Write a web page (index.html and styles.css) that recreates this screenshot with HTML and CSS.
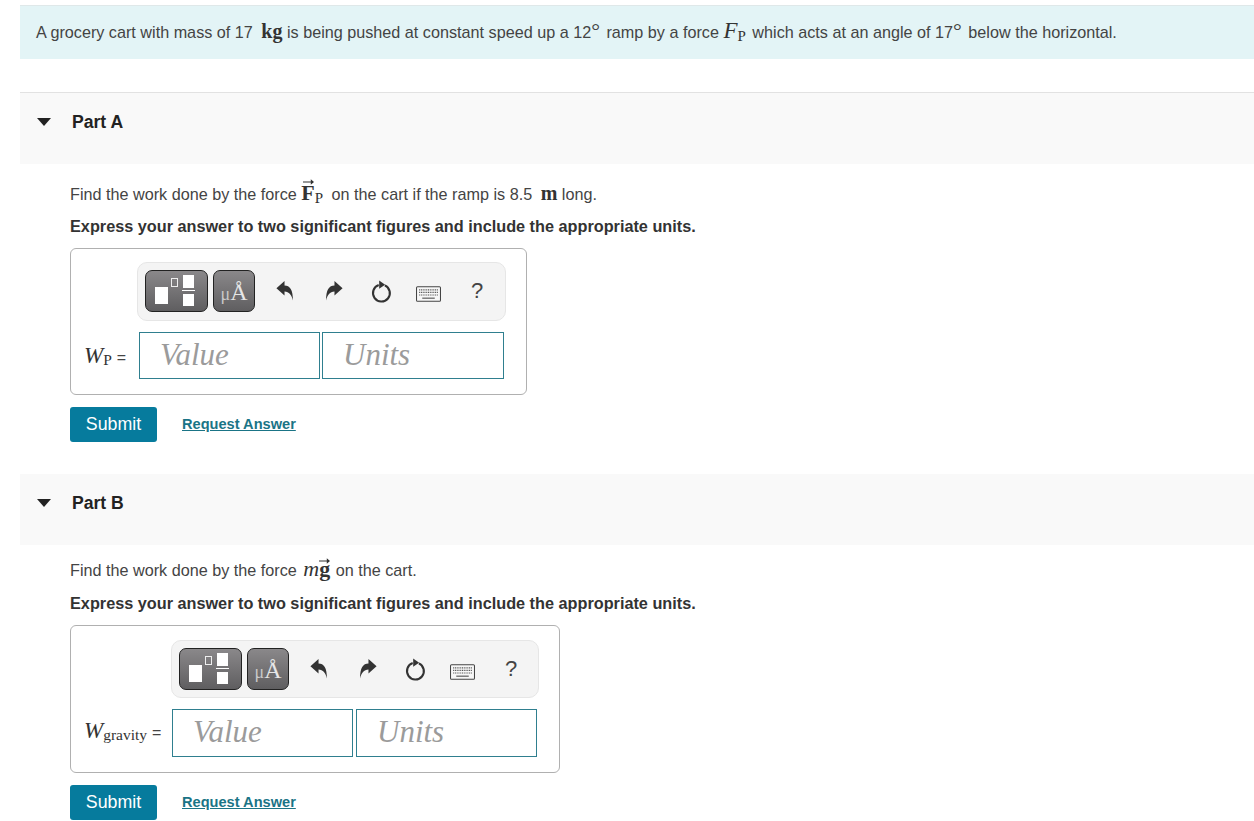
FILE: index.html
```html
<!DOCTYPE html>
<html lang="en">
<head>
<meta charset="utf-8">
<title>Grocery cart problem</title>
<link rel="stylesheet" href="styles.css">
</head>
<body>
<svg class="defs" width="0" height="0" aria-hidden="true">
  <symbol id="i-undo" viewBox="0 0 18 21"><path d="M0 7.500 8.500 0v4.600c5.600 0 9 4.400 8.800 16-1.300-6-4-9.300-8.800-9.600V15.200Z"/></symbol>
  <symbol id="i-reset" viewBox="0 0 24 24"><path d="M9.500 5A9.200 9.200 0 1 0 16.200 5.300" fill="none" stroke="currentColor" stroke-width="2.300"/><path d="M10 0 16.500 4.500 10 9Z"/></symbol>
  <symbol id="i-keys" viewBox="0 0 24 15">
    <rect x=".5" y=".5" width="23" height="14" rx="1" fill="#f7f7f7" stroke="currentColor" stroke-width="1"/>
    <path d="M3 3.500h18M3 6h18M3 8.500h18" stroke="#555" stroke-width="1.100" stroke-dasharray="1 .7" fill="none"/>
    <path d="M6 11.500h12" stroke="#555" stroke-width="1.100" fill="none"/>
  </symbol>
  <symbol id="i-arrow" viewBox="0 0 12 6"><path d="M0 2.500h8.500V0L12 3 8.500 6V3.500H0Z"/></symbol>
</svg>

<main class="page">
  <section class="intro">
    <p>A grocery cart with mass of 17 <span class="unit">kg</span> is being pushed at constant speed up a 12<span class="deg">°</span> ramp by a force <span class="math"><i class="big">F</i><sub>P</sub></span> which acts at an angle of 17<span class="deg">°</span> below the horizontal.</p>
  </section>

  <section class="part part-a">
    <header class="part-head"><span class="caret"></span><h2>Part A</h2></header>
    <div class="part-body">
      <p class="question">Find the work done by the force <span class="math"><span class="vec"><svg class="vec-arrow"><use href="#i-arrow"/></svg><b class="big">F</b></span><sub>P</sub></span> on the cart if the ramp is 8.5 <span class="unit">m</span> long.</p>
      <p class="hint">Express your answer to two significant figures and include the appropriate units.</p>
      <div class="answer">
        <div class="label"><span class="math"><i class="big">W</i><sub>P</sub></span><span class="eq">=</span></div>
        <div class="editor">
          <div class="toolbar">
            <button class="tool tool-tpl" type="button"><span class="sq sq-big"></span><span class="sq sq-sup"></span><span class="frac"><span></span><em></em><span></span></span></button>
            <button class="tool tool-unit" type="button"><span class="mu">μ</span>Å</button>
            <span class="actions">
              <svg class="ic ic-undo"><use href="#i-undo"/></svg>
              <svg class="ic ic-redo"><use href="#i-undo"/></svg>
              <svg class="ic ic-reset"><use href="#i-reset"/></svg>
              <svg class="ic ic-keys"><use href="#i-keys"/></svg>
              <span class="help">?</span>
            </span>
          </div>
          <div class="fields"><span class="field">Value</span><span class="field">Units</span></div>
        </div>
      </div>
      <div class="controls"><button class="submit" type="button">Submit</button><a class="request" href="#">Request Answer</a></div>
    </div>
  </section>

  <section class="part part-b">
    <header class="part-head"><span class="caret"></span><h2>Part B</h2></header>
    <div class="part-body">
      <p class="question">Find the work done by the force <span class="math"><i class="big">m</i><span class="vec"><svg class="vec-arrow"><use href="#i-arrow"/></svg><b class="big">g</b></span></span> on the cart.</p>
      <p class="hint">Express your answer to two significant figures and include the appropriate units.</p>
      <div class="answer">
        <div class="label"><span class="math"><i class="big">W</i><sub>gravity</sub></span><span class="eq">=</span></div>
        <div class="editor">
          <div class="toolbar">
            <button class="tool tool-tpl" type="button"><span class="sq sq-big"></span><span class="sq sq-sup"></span><span class="frac"><span></span><em></em><span></span></span></button>
            <button class="tool tool-unit" type="button"><span class="mu">μ</span>Å</button>
            <span class="actions">
              <svg class="ic ic-undo"><use href="#i-undo"/></svg>
              <svg class="ic ic-redo"><use href="#i-undo"/></svg>
              <svg class="ic ic-reset"><use href="#i-reset"/></svg>
              <svg class="ic ic-keys"><use href="#i-keys"/></svg>
              <span class="help">?</span>
            </span>
          </div>
          <div class="fields"><span class="field">Value</span><span class="field">Units</span></div>
        </div>
      </div>
      <div class="controls"><button class="submit" type="button">Submit</button><a class="request" href="#">Request Answer</a></div>
    </div>
  </section>
</main>
</body>
</html>
```

FILE: styles.css
```css
* { box-sizing: border-box; }
html, body { margin: 0; height: 821px; overflow: hidden; background: #fff; }
body { font-family: "Liberation Sans", Arial, sans-serif; font-size: 16.2px; color: #444; }
.defs { position: absolute; }
p { margin: 0; }

.page { padding: 5px 0 0 20px; }

.intro {
  height: 54px;
  background: #e3f4f6;
  border-top: 1px solid #dfe8e9;
  padding: 0 0 0 16px;
  display: flex;
  align-items: center;
}

.math { font-family: "Liberation Serif", serif; white-space: nowrap; margin-right: 2px; color: #333; }
.big { font-size: 22px; line-height: 0; }
.math i.big { font-style: italic; }
.math sub { font-size: 15px; line-height: 0; vertical-align: -3px; }
.intro .big { font-size: 23px; }
.part-a .question .math { margin-right: 4px; }
.part-b .question .math { margin: 0 1px 0 2px; }
.unit { font-family: "Liberation Serif", serif; font-size: 20px; font-weight: bold; margin: 0 0 0 4px; line-height: 0; color: #333; }
.deg { font-family: "Liberation Serif", serif; font-size: 22px; line-height: 0; margin-right: 2px; }
.vec { position: relative; }
.vec-arrow { position: absolute; left: 2px; top: -7px; width: 11px; height: 6px; fill: #333; }
.part-b .vec-arrow { left: 0; top: -4px; }

.part-a { margin-top: 33px; }
.part-b { margin-top: 32px; }
.part-head {
  height: 72px;
  background: #f9f9f9;
  display: flex;
  align-items: flex-start;
  padding: 18px 0 0 17px;
}
.part-a .part-head { border-top: 1px solid #e2e2e2; }
.part-b .part-head { height: 71px; }
.caret {
  width: 0; height: 0;
  border-left: 7px solid transparent;
  border-right: 7px solid transparent;
  border-top: 8px solid #222;
  margin-top: 7px;
}
h2 { margin: 0 0 0 21px; font-size: 17.6px; line-height: 22px; font-weight: bold; color: #222; }

.part-body { padding: 18px 0 0 50px; }
.part-b .part-body { padding-top: 13px; }
.question { line-height: 24px; height: 24px; }
.hint { font-size: 16.250px; font-weight: bold; line-height: 22px; margin-top: 9px; color: #333; }
.part-b .hint { margin-top: 10px; }

.answer {
  display: inline-flex;
  align-items: flex-end;
  margin-top: 11px;
  padding: 13px 0 15px 13px;
  border: 1px solid #b0b0b0;
  border-radius: 6px;
  vertical-align: top;
}
.part-a .answer { height: 147px; width: 457px; }
.part-b .answer { height: 148px; width: 490px; padding-top: 14px; }
.label { flex: none; width: 53px; height: 42px; display: flex; align-items: center; gap: 5px; white-space: nowrap; }
.part-b .label { width: 87px; height: 48px; }
.eq { font-size: 16px; }
.label .big { font-size: 23px; }
.label .math { margin-right: 0; }
.label sub { font-size: 15.500px; vertical-align: -2px; }

.editor { flex: none; display: flex; flex-direction: column; gap: 11px; }
.toolbar {
  width: 369px;
  height: 59px;
  background: #f4f4f4;
  border: 1px solid #e6e6e6;
  border-radius: 10px;
  display: flex;
  align-items: center;
  gap: 5px;
  padding: 0 0 0 7px;
}
.part-b .toolbar { width: 368px; height: 58px; }
.tool {
  height: 42px;
  padding: 0;
  border: 1px solid #222;
  border-radius: 7px;
  background: linear-gradient(#8a888a, #5f5e60);
  position: relative;
  margin-top: -2px;
}
.part-b .tool { margin-top: -1px; }
.tool-tpl { width: 63px; }
.tool-unit {
  width: 42px;
  color: #e6e6e6;
  font-family: "Liberation Serif", serif;
  font-size: 24px;
  line-height: 1;
  padding-top: 2px;
  white-space: nowrap;
}
.mu { font-size: 18px; color: #c8c8c8; }
.sq { position: absolute; background: #fff; display: block; }
.sq-big { left: 9px; top: 16px; width: 13px; height: 17px; }
.sq-sup { left: 25px; top: 7px; width: 7px; height: 9px; background: transparent; border: 1px solid #eee; }
.frac { position: absolute; left: 36px; top: 4px; width: 12px; display: flex; flex-direction: column; align-items: center; }
.frac span { width: 11px; height: 13px; background: #fff; }
.frac span:last-child { height: 12px; }
.frac em { width: 13px; height: 1px; background: #fff; margin: 2px 0 3px; }

.actions { display: flex; align-items: center; height: 100%; position: relative; flex: 1; }
.ic { position: absolute; fill: #333; color: #333; }
.ic-undo { left: 16px; top: 18px; width: 18px; height: 20px; }
.ic-redo { left: 65px; top: 18px; width: 18px; height: 20px; transform: scaleX(-1); }
.ic-reset { left: 110px; top: 17px; width: 22px; height: 23px; }
.ic-keys { left: 156px; top: 23px; width: 25px; height: 16px; color: #444; }
.help { position: absolute; left: 211px; top: 15px; font-size: 22px; line-height: 26px; color: #444; }

.fields { display: flex; gap: 2px; margin-left: 2px; }
.part-b .fields { gap: 3px; margin-left: 1px; }
.field {
  width: 181px;
  height: 47px;
  border: 1px solid #2f7f8f;
  background: #fff;
  padding-left: 20px;
  font-family: "Liberation Serif", serif;
  font-style: italic;
  font-size: 31px;
  line-height: 44px;
  color: #9b9b9b;
}
.part-a .field + .field { width: 182px; }
.part-b .field { height: 48px; }

.controls { display: flex; align-items: center; margin-top: 12px; }
.submit {
  width: 87px;
  height: 35px;
  border: 0;
  border-radius: 3px;
  background: #067b9d;
  color: #fff;
  font: 17.800px "Liberation Sans", Arial, sans-serif;
  padding: 0;
}
.request {
  margin: 0 0 2px 25px;
  font-size: 14.600px;
  font-weight: bold;
  color: #1a7486;
  text-decoration: underline;
}
```
